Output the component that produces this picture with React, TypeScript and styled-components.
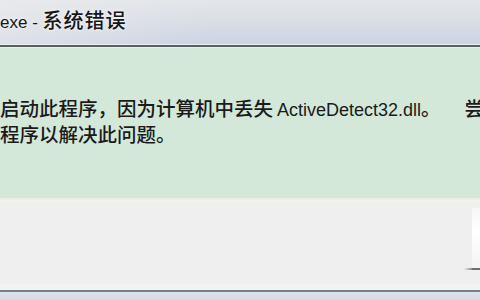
import styled, { createGlobalStyle } from "styled-components";

const GlobalStyle = createGlobalStyle`
	html,
	body {
		margin: 0;
		padding: 0;
		width: 480px;
		height: 300px;
		overflow: hidden;
		background: #efefef;
	}
`;

const Window = styled.div`
	display: flex;
	flex-direction: column;
	width: 480px;
	height: 300px;
	overflow: hidden;
	font-family: "Noto Sans CJK SC", "Liberation Sans", sans-serif;
	color: #161616;
`;

const TitleBar = styled.div`
	display: flex;
	align-items: center;
	height: 44px;
	flex: 0 0 auto;
	background: linear-gradient(90deg, rgba(236, 236, 236, 0.55) 0%, rgba(236, 236, 236, 0) 45%),
		linear-gradient(180deg, #e4e6ea 0%, #dadee6 45%, #ccd3e3 100%);
`;

const TitleText = styled.div`
	font-size: 20px;
	font-weight: 500;
	letter-spacing: 1px;
	line-height: 24px;
	margin-top: -2px;
	white-space: nowrap;
	text-shadow: 0 0 4px rgba(255, 255, 255, 0.9);
`;

const Latin = styled.span<{ $size?: number }>`
	font-family: "Liberation Sans", sans-serif;
	font-size: ${(props) => props.$size ?? 18}px;
	letter-spacing: 0;
`;

const Rule = styled.div<{ $color: string; $height?: number }>`
	flex: 0 0 auto;
	height: ${(props) => props.$height ?? 1}px;
	background: ${(props) => props.$color};
`;

const MessagePane = styled.div`
	flex: 0 0 150px;
	padding-top: 48px;
	box-sizing: border-box;
	background: #d3e8d8;
`;

const MessageLine = styled.div`
	font-size: 19.5px;
	font-weight: 500;
	line-height: 23px;
	white-space: nowrap;
	color: #1b1b1b;
`;

const Gap = styled.span<{ $w: number }>`
	display: inline-block;
	width: ${(props) => props.$w}px;
`;

const ButtonArea = styled.div`
	flex: 1 1 auto;
	display: flex;
	justify-content: flex-end;
	align-items: flex-start;
	padding-top: 6px;
	background: #efefef;
`;

// only the left edge of the OK button is inside the shot
const CroppedButton = styled.div`
	width: 8px;
	height: 60px;
	background: linear-gradient(180deg, #f6f6f6 0%, #ffffff 40%, #f4f4f4 100%);
	border-bottom: 2px solid #6e6e6e;
	position: relative;

	&::before {
		content: "";
		position: absolute;
		left: -8px;
		bottom: -2px;
		width: 8px;
		height: 2px;
		background: linear-gradient(90deg, rgba(110, 110, 110, 0) 0%, #8a8a8a 100%);
	}
`;

const StatusStrip = styled.div`
	flex: 0 0 auto;
	height: 6px;
	background: #f3f3f5;
`;

const Footer = styled.div`
	flex: 0 0 auto;
	height: 8px;
	background: linear-gradient(180deg, #dfe3ea 0%, #d3d9e2 100%);
`;

export default function App() {
	return (
		<>
			<GlobalStyle />
			<Window>
				<TitleBar>
					<TitleText>
						<Latin $size={17}>exe - </Latin>系统错误
					</TitleText>
				</TitleBar>
				<Rule $color="#eef1f1" />
				<Rule $color="#56605f" $height={2} />
				<Rule $color="#e6f2e8" />
				<MessagePane>
					<MessageLine>
						启动此程序，因为计算机中丢失<Gap $w={4} />
						<Latin>ActiveDetect32.dll</Latin>。<Gap $w={24} />尝
					</MessageLine>
					<MessageLine>程序以解决此问题。</MessageLine>
				</MessagePane>
				<Rule $color="#eceee6" $height={2} />
				<Rule $color="#f4f0ea" $height={2} />
				<ButtonArea>
					<CroppedButton />
				</ButtonArea>
				<StatusStrip />
				<Rule $color="#75808a" $height={2} />
				<Footer />
			</Window>
		</>
	);
}
